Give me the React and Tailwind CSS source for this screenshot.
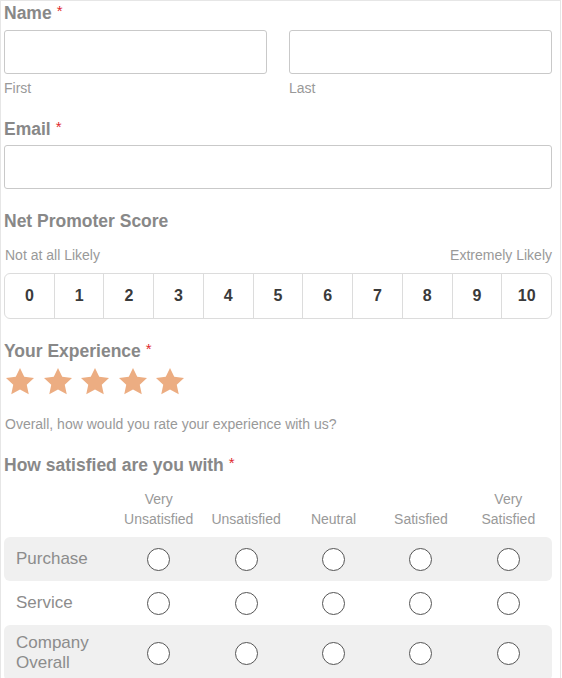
import React from "react";

const Req = () => <span className="text-[#e0282e] text-[15px] leading-[15px] align-top ml-[5px] font-normal">*</span>;

function Star() {
  return (
    <svg width="30" height="29" viewBox="0 0 24 23" className="block">
      <path
        d="M12 0.6l3.4 7.1 7.8 0.9-5.8 5.4 1.6 7.7L12 17.9l-7 3.8 1.6-7.7L0.8 8.6l7.8-0.9z"
        fill="#ecad82"
      />
    </svg>
  );
}

const Radio = () => (
  <div className="flex justify-center">
    <span className="block w-[23px] h-[23px] rounded-full border border-[#555] bg-white" />
  </div>
);

export default function App() {
  const cols = [["Very", "Unsatisfied"], ["", "Unsatisfied"], ["", "Neutral"], ["", "Satisfied"], ["Very", "Satisfied"]];
  const rows = [
    { label: ["Purchase"], shade: true, h: "h-[44px]" },
    { label: ["Service"], shade: false, h: "h-[44px]" },
    { label: ["Company", "Overall"], shade: true, h: "h-[56px]" },
  ];
  return (
    <div className="w-[561px] h-[678px] overflow-hidden border-l border-t border-r border-[#e6e6e6] bg-white pl-[3px] pr-[8px] pt-[2px] text-[#888]" style={{ fontFamily: '"Liberation Sans", Arial, sans-serif' }}>
      {/* Name */}
      <div className="text-[17.5px] leading-[21px] font-bold">Name<Req /></div>
      <div className="flex gap-[22px] mt-[6px]">
        <div className="flex-1">
          <div className="h-[44px] rounded-[3px] border border-[#c9c9c9]" />
          <div className="text-[14px] leading-[20px] mt-[4px] text-[#999]">First</div>
        </div>
        <div className="flex-1">
          <div className="h-[44px] rounded-[3px] border border-[#c9c9c9]" />
          <div className="text-[14px] leading-[20px] mt-[4px] text-[#999]">Last</div>
        </div>
      </div>

      {/* Email */}
      <div className="text-[17.5px] leading-[21px] font-bold mt-[21px]">Email<Req /></div>
      <div className="h-[44px] rounded-[3px] border border-[#c9c9c9] mt-[5px]" />

      {/* NPS */}
      <div className="text-[17.5px] leading-[21px] font-bold mt-[22px]">Net Promoter Score</div>
      <div className="flex justify-between text-[14px] leading-[20px] text-[#999] mt-[13px] pl-[1px]">
        <span>Not at all Likely</span>
        <span>Extremely Likely</span>
      </div>
      <div className="flex mt-[8px] h-[46px] rounded-[6px] border border-[#dcdcdc] overflow-hidden">
        {Array.from({ length: 11 }, (_, i) => (
          <div key={i} className={`flex-1 flex items-center justify-center text-[16px] font-bold text-[#3a3a3a] ${i > 0 ? "border-l border-[#dcdcdc]" : ""}`}>
            {i}
          </div>
        ))}
      </div>

      {/* Experience */}
      <div className="text-[17.5px] leading-[21px] font-bold mt-[22px]">Your Experience<Req /></div>
      <div className="flex gap-[7.5px] mt-[5px] pl-[1px]">
        {Array.from({ length: 5 }, (_, i) => <Star key={i} />)}
      </div>
      <div className="text-[14px] leading-[20px] text-[#999] mt-[18px] pl-[1px]">Overall, how would you rate your experience with us?</div>

      {/* Matrix */}
      <div className="text-[17.5px] leading-[21px] font-bold mt-[21px]">How satisfied are you with<Req /></div>
      <div className="mt-[13px]">
        <div className="flex text-[14px] leading-[20px] text-[#999]">
          <div className="w-[111px]" />
          {cols.map((c, i) => (
            <div key={i} className="flex-1 text-center">
              <div>{c[0] || "\u00a0"}</div>
              <div>{c[1]}</div>
            </div>
          ))}
        </div>
        <div className="mt-[8px]">
          {rows.map((r, i) => (
            <div key={i} className={`flex items-center ${r.h} rounded-[6px] ${r.shade ? "bg-[#f0f0f0]" : ""}`}>
              <div className="w-[111px] pl-[12px] text-[17px] leading-[20px] text-[#8c8c8c]">
                {r.label.map((l, j) => <div key={j}>{l}</div>)}
              </div>
              {cols.map((_, j) => (
                <div key={j} className="flex-1"><Radio /></div>
              ))}
            </div>
          ))}
        </div>
      </div>
    </div>
  );
}
